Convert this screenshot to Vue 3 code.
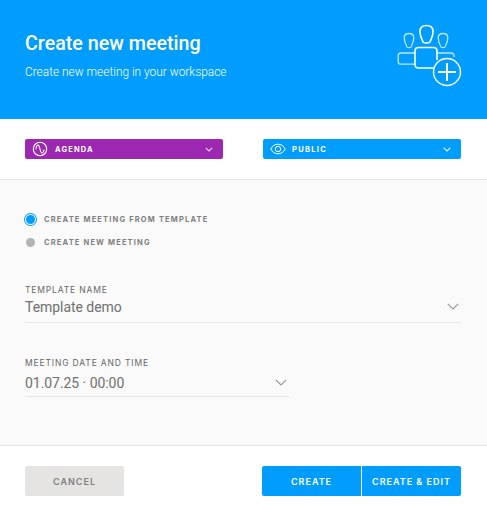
<script setup>
const radios = [
  { label: 'CREATE MEETING FROM TEMPLATE', active: true },
  { label: 'CREATE NEW MEETING', active: false },
]
</script>

<template>
  <div class="dialog">
    <header class="head">
      <div class="head-text">
        <h1>Create new meeting</h1>
        <p>Create new meeting in your workspace</p>
      </div>
      <svg class="head-icon" width="66" height="64" viewBox="0 0 66 64" fill="none" stroke="#fff">
        <g stroke-opacity=".75" stroke-width="1.300">
          <path d="M12 9.500c3 0 4.800 1.800 4.800 4.300 0 3.200-1.500 7-2.800 9.200-.5.800-3.500.800-4 0-1.300-2.200-2.800-6-2.800-9.200 0-2.500 1.800-4.300 4.800-4.300z"/>
          <path d="M46 9.500c3 0 4.800 1.800 4.800 4.300 0 3.200-1.500 7-2.800 9.200-.5.800-3.500.800-4 0-1.300-2.200-2.800-6-2.800-9.200 0-2.500 1.800-4.300 4.800-4.300z"/>
          <path d="M18 29H3.500C2 29 1.200 30 1.200 31.500v6c0 1.700 1 2.700 2.300 2.700H18"/>
          <path d="M40 29h14c1.700 0 2.700.8 3 2.500l.3 1.500"/>
        </g>
        <g stroke-width="1.600">
          <path d="M29.500 1.500c4 0 6.500 2.300 6.500 6 0 3.800-1.800 8-3.300 10.800-.6 1-5.800 1-6.400 0C24.800 15.500 23 11.300 23 7.500c0-3.700 2.500-6 6.500-6z"/>
          <path d="M37 44H21.500c-2.200 0-3.500-1.300-3.500-3.500V27c0-2.200 1.300-3.500 3.500-3.500h15c2.200 0 3.500 1.300 3.500 3.500v9"/>
        </g>
        <circle cx="50" cy="48" r="13.500" fill="#009dff" stroke-width="1.400"/>
        <path d="M50 39v18M41 48h18" stroke-width="2"/>
      </svg>
    </header>

    <section class="pickers">
      <button class="picker purple">
        <svg width="16" height="16" viewBox="0 0 16 16" fill="none" stroke="#fff" stroke-width="1.100">
          <circle cx="8" cy="8" r="6.700"/>
          <path d="M3.800 8.500C4.300 5.500 5 4 6.100 4c1.900 0 1.800 8 3.700 8 1 0 1.800-1.300 2.400-3.300"/>
        </svg>
        <span class="picker-label">AGENDA</span>
        <svg class="chev" width="8" height="5" viewBox="0 0 8 5" fill="none" stroke="#fff" stroke-opacity=".8" stroke-width="1.100"><path d="M.8.8 4 4l3.200-3.200"/></svg>
      </button>
      <button class="picker blue">
        <svg width="16" height="12" viewBox="0 0 16 12" fill="none" stroke="#fff" stroke-width="1">
          <path d="M.7 6C2.500 2.800 5 1.200 8 1.200S13.500 2.800 15.300 6C13.500 9.200 11 10.800 8 10.800S2.500 9.200.7 6z"/>
          <circle cx="8" cy="6" r="2.700"/>
        </svg>
        <span class="picker-label">PUBLIC</span>
        <svg class="chev" width="8" height="5" viewBox="0 0 8 5" fill="none" stroke="#fff" stroke-width="1.100"><path d="M.8.8 4 4l3.200-3.200"/></svg>
      </button>
    </section>

    <main class="body">
      <div class="radios">
        <div v-for="r in radios" :key="r.label" class="radio">
          <span class="dot" :class="{ on: r.active }"></span>
          <span class="radio-label">{{ r.label }}</span>
        </div>
      </div>

      <div class="field">
        <label>TEMPLATE NAME</label>
        <div class="value">
          <span>Template demo</span>
          <svg width="12" height="7" viewBox="0 0 12 7" fill="none" stroke="#9a9a9a" stroke-width="1.200"><path d="M.8.8 6 6l5.200-5.200"/></svg>
        </div>
      </div>

      <div class="field short">
        <label>MEETING DATE AND TIME</label>
        <div class="value">
          <span>01.07.25 · 00:00</span>
          <svg width="12" height="7" viewBox="0 0 12 7" fill="none" stroke="#9a9a9a" stroke-width="1.200"><path d="M.8.8 6 6l5.200-5.200"/></svg>
        </div>
      </div>
    </main>

    <footer class="foot">
      <button class="btn cancel">CANCEL</button>
      <div class="group">
        <button class="btn primary left">CREATE</button>
        <button class="btn primary right">CREATE &amp; EDIT</button>
      </div>
    </footer>
  </div>
</template>

<style>
html, body { margin: 0; background: #fff; }
</style>

<style scoped>
.dialog {
  width: 487px;
  height: 511px;
  display: flex;
  flex-direction: column;
  background: #fff;
  overflow: hidden;
  font-family: Roboto, sans-serif;
}
.head {
  height: 119px;
  flex: none;
  box-sizing: border-box;
  background: #009dff;
  color: #fff;
  padding: 0 25px;
  display: flex;
  justify-content: space-between;
}
.head-text { padding-top: 32px; }
.head h1 {
  margin: 0;
  font-size: 19.700px;
  line-height: 24px;
  font-weight: 500;
}
.head p {
  margin: 9px 0 0;
  font-size: 11.900px;
  line-height: 14px;
  font-weight: 300;
}
.head-icon { margin-top: 24px; margin-right: -1px; }
.pickers {
  flex: none;
  height: 61px;
  box-sizing: border-box;
  padding: 20px 26px 0 25px;
  display: flex;
  justify-content: space-between;
  border-bottom: 1px solid #e4e4e4;
}
.picker {
  width: 198px;
  height: 20px;
  border: 0;
  border-radius: 2px;
  padding: 0 10px 0 7px;
  display: flex;
  align-items: center;
  color: #fff;
}
.purple { background: #9c27b0; }
.blue { background: #009dff; }
.picker-label {
  margin-left: 7px;
  font-family: Inter, sans-serif;
  font-size: 7.500px;
  font-weight: 700;
  letter-spacing: 1.150px;
}
.blue .picker-label { margin-left: 6px; letter-spacing: 1.300px; }
.chev { margin-left: auto; }
.body {
  flex: 1;
  background: #fafafa;
  padding: 0 26px 0 25px;
}
.radios { padding-top: 28px; }
.radio {
  height: 23px;
  display: flex;
  align-items: center;
  position: relative;
  padding-left: 19px;
}
.dot {
  position: absolute;
  left: 1px;
  top: 7px;
  width: 9px;
  height: 9px;
  border-radius: 50%;
  background: #b3b3b3;
}
.dot.on {
  background: #009dff;
  box-shadow: 0 0 0 1px #fafafa, 0 0 0 2px #009dff;
}
.radio-label {
  font-family: Inter, sans-serif;
  font-size: 7.500px;
  font-weight: 700;
  letter-spacing: 1.170px;
  color: #808080;
}
.field {
  margin-top: 30px;
  border-bottom: 1px solid #e6e6e6;
}
.field + .field { margin-top: 34px; }
.field.short { width: 264px; }
.field.short .value { padding-top: 3px; padding-bottom: 3px; }
.field label {
  display: block;
  font-family: Inter, sans-serif;
  font-size: 8.500px;
  line-height: 12px;
  font-weight: 400;
  letter-spacing: .85px;
  color: #666;
}
.value {
  height: 21px;
  display: flex;
  justify-content: space-between;
  align-items: center;
  font-size: 14px;
  letter-spacing: -.05px;
  color: #707070;
  padding-bottom: 5px;
  padding-right: 2px;
}
.foot {
  height: 66px;
  flex: none;
  box-sizing: border-box;
  border-top: 1px solid #e4e4e4;
  padding: 20px 26px 0 25px;
  display: flex;
  justify-content: space-between;
  align-items: flex-start;
}
.group { display: flex; gap: 1px; }
.btn {
  width: 99px;
  height: 30px;
  border: 0;
  padding: 0;
  font-family: Inter, sans-serif;
  font-size: 9px;
  font-weight: 600;
  letter-spacing: 1px;
}
.cancel {
  background: #e5e4e3;
  color: #808080;
  border-radius: 2px;
}
.primary { background: #009dff; color: #fff; }
.left { border-radius: 2px 0 0 2px; }
.right { border-radius: 0 2px 2px 0; }
</style>
